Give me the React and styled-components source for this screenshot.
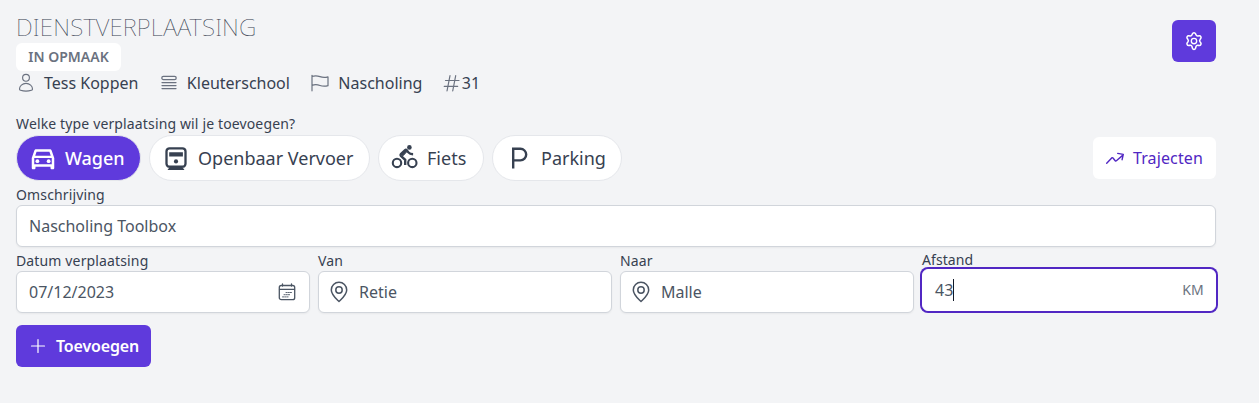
import React from "react";
import styled, { createGlobalStyle, css } from "styled-components";
import { MdOutlineDirectionsCar } from "react-icons/md";

const GlobalStyle = createGlobalStyle`
  *, *::before, *::after { box-sizing: border-box; }
  body {
    margin: 0;
    background: #f3f4f6;
    color: #374151;
    font-family: "Noto Sans", "Open Sans", sans-serif;
    font-size: 16px;
    line-height: 24px;
  }
  button, input { font: inherit; color: inherit; margin: 0; }
  svg { display: block; flex: none; }
`;

const Page = styled.main`
  min-height: 403px;
  padding: 12px 43px 36px 16px;
`;

const Header = styled.header`
  display: flex;
  justify-content: space-between;
  align-items: flex-start;
`;

const Title = styled.h1`
  margin: 0 0 1px;
  font-size: 24px;
  font-weight: 100;
  line-height: 30px;
  letter-spacing: 0.2px;
  text-transform: uppercase;
`;

const Status = styled.span`
  display: block;
  width: 105px;
  height: 28px;
  border-radius: 6px;
  background: #fff;
  color: #6b7280;
  font-size: 14px;
  font-weight: 600;
  line-height: 28px;
  text-align: center;
`;

const MetaList = styled.div`
  display: flex;
  color: #374151;
`;

const Meta = styled.span`
  display: flex;
  align-items: center;
  gap: ${(p) => p.$gap ?? 8}px;
  margin-right: 20.4px;
  svg { color: #6b7280; }
`;

const SettingsButton = styled.button`
  display: grid;
  place-items: center;
  width: 44px;
  height: 42px;
  margin-top: 8px;
  border: 0;
  border-radius: 6px;
  background: #5f3adc;
  color: #fff;
`;

const Label = styled.label`
  display: block;
  font-size: 14px;
  line-height: 20px;
  letter-spacing: 0.14px;
  ${(p) => p.$focused && css`
    margin-top: -1px;
    line-height: 19px;
    letter-spacing: 0.08px;
  `}
`;

const TypeSection = styled.section`
  margin-top: 19px;
`;

const TypeRow = styled.div`
  display: flex;
  align-items: center;
  justify-content: space-between;
  margin-top: 1px;
`;

const Pills = styled.div`
  display: flex;
  gap: 8px;
`;

const Pill = styled.button`
  display: flex;
  align-items: center;
  gap: 7px;
  width: ${(p) => p.$width}px;
  height: 46px;
  padding: 0 0 0 11px;
  border: 1px solid #e5e7eb;
  border-radius: 23px;
  background: ${(p) => (p.$active ? "#5f3adc" : "#fff")};
  color: ${(p) => (p.$active ? "#fff" : "#374151")};
  font-size: 18px;
  font-weight: ${(p) => (p.$active ? 500 : 400)};
  line-height: 28px;
  white-space: nowrap;
`;

const RoutesButton = styled.button`
  display: flex;
  align-items: center;
  gap: 8px;
  width: 123px;
  height: 42px;
  padding: 0 0 0 12px;
  border: 0;
  border-radius: 6px;
  background: #fff;
  color: #5127c3;
  letter-spacing: 0.12px;
`;

const Fields = styled.div`
  display: grid;
  grid-template-columns: repeat(${(p) => p.$columns}, minmax(0, 1fr));
  gap: 8px;
  margin-top: 4px;
`;

const InputBox = styled.div`
  display: flex;
  align-items: center;
  gap: 8px;
  height: 42px;
  padding: 0 12px 0 ${(p) => (p.$icon ? 8 : 12)}px;
  border: 1px solid #d1d5db;
  border-radius: 6px;
  background: #fff;
  color: #4b5563;
  box-shadow: 0 1px 2px rgba(0, 0, 0, 0.05);
  ${(p) => p.$focused && css`
    padding-right: 11px;
    border-color: #fff;
    box-shadow: 0 0 0 2px #5127c3;
  `}
`;

const Value = styled.span`
  flex: 1;
  display: flex;
  align-items: center;
`;

const Caret = styled.span`
  width: 1px;
  height: 22px;
  background: #111827;
`;

const Unit = styled.span`
  color: #6b7280;
  font-size: 14px;
  letter-spacing: 0.2px;
`;

const AddButton = styled.button`
  display: flex;
  align-items: center;
  gap: 8px;
  width: 135px;
  height: 42px;
  margin-top: 12px;
  padding: 0 0 0 12px;
  border: 0;
  border-radius: 6px;
  background: #5f3adc;
  color: #fff;
  font-weight: 600;
  letter-spacing: -0.15px;
`;

const LineIcon = ({ size = 20, width = 1.5, box = 24, children }) => (
  <svg width={size} height={size} viewBox={`0 0 ${box} ${box}`} fill="none" stroke="currentColor"
    strokeWidth={width} strokeLinecap="round" strokeLinejoin="round">{children}</svg>
);

const PersonIcon = () => (
  <LineIcon box={20} width={1.15}>
    <circle cx="10" cy="4.8" r="3.4" />
    <path d="M10 10.4c-3.7 0-6.5 2.6-6.5 5.6 0 .7.4 1.1 1 1.3 3.2 1 7.8 1 11 0 .6-.2 1-.6 1-1.3 0-3-2.8-5.6-6.5-5.6z" />
  </LineIcon>
);

const StackIcon = () => (
  <LineIcon box={20} width={1.25}>
    <rect x="2.8" y="3.4" width="14.400" height="3.200" rx="1.600" />
    <path d="M3 9.500h14M3 12.500h14M3 15.500h14" />
  </LineIcon>
);

const FlagIcon = () => (
  <LineIcon box={20} width={1.2}>
    <path d="M2 2.300v15.500M2 3.500c3-1.200 5.500-.8 8 .1s5 1 8 .2v8.900c-3 .8-5.500.7-8-.2s-5-1.200-8-.1" />
  </LineIcon>
);

const HashIcon = () => (
  <LineIcon size={17} box={17} width={1.2}>
    <path d="M7 .7 4 16M12.700.7 9.700 16M2.500 5.500h13.500M1.200 11.300h13.500" />
  </LineIcon>
);

const GearIcon = () => (
  <LineIcon box={20} width={1.35}>
    <circle cx="10" cy="10" r="2.700" />
    <path d="M8.600 3.200a1.500 1.500 0 0 1 2.800 0l.35.9a1.700 1.700 0 0 0 1.850 1.050l1-.15a1.500 1.500 0 0 1 1.400 2.400l-.6.800a1.700 1.700 0 0 0 0 2.100l.6.800a1.500 1.500 0 0 1-1.400 2.400l-1-.15a1.700 1.700 0 0 0-1.850 1.050l-.35 1.500a1.500 1.500 0 0 1-2.800 0l-.35-1.500A1.700 1.700 0 0 0 6.400 13.350l-1 .15A1.500 1.500 0 0 1 4 11.100l.6-.8a1.700 1.700 0 0 0 0-2.100L4 7.400A1.500 1.500 0 0 1 5.400 5l1 .15A1.700 1.700 0 0 0 8.250 4.100z" transform="translate(-1.200 -.85) scale(1.120 1.140)" />
  </LineIcon>
);

const TrendIcon = () => (
  <LineIcon box={20} width={1.4}>
    <path d="M1.700 15.200 6.700 9.900q.7-.6 1.300.1l2.200 2.700q.6.600 1.200.1L18.200 6.900M12.700 5.400l5.600 1-1.200 5.300" />
  </LineIcon>
);

const TrainIcon = () => (
  <svg width="30" height="30" viewBox="0 0 30 30" fill="currentColor">
    <rect x="5.500" y="5.300" width="19" height="18.400" rx="3" fill="none" stroke="currentColor" strokeWidth="2.300" />
    <path d="M8.200 9.200h13.700v4.200H8.200zM8.700 24h12.600l2.200 3H6.500z" />
    <circle cx="15" cy="18.400" r="2.100" />
  </svg>
);

const BikeIcon = () => (
  <svg width="30" height="30" viewBox="0 0 30 30" fill="none" stroke="currentColor" strokeWidth="2.100">
    <circle cx="7" cy="19.900" r="4.200" />
    <circle cx="22.300" cy="19.900" r="4.200" />
    <circle cx="19.400" cy="4.400" r="2.300" fill="currentColor" stroke="none" />
    <path d="M15.200 22v-5.200l-4.300-3.900q-.8-.9 0-1.800l4.200-4q.8-.7 1.600.1l1.600 2q1.600 1.900 4.800 2" strokeWidth="2.400" />
    <path d="m11 11 4.400-4 1.500 1.600-3.900 4.200z" fill="currentColor" strokeWidth="1" />
  </svg>
);

const ParkingIcon = () => (
  <svg width="30" height="30" viewBox="0 0 30 30" fill="none" stroke="currentColor" strokeWidth="2.400">
    <path d="M9.200 25.500V5.800h7.200a5.700 5.700 0 0 1 0 11.600H9.200" />
  </svg>
);

const CalendarIcon = () => (
  <LineIcon box={20} width={1.3}>
    <rect x="2.300" y="3.500" width="15.400" height="14.200" rx="2" />
    <path d="M2.500 7.300h15M5.500 2v2M14.500 2v2" />
    <path d="M9 10.500h5.500M7 12.700h6.500M5.500 14.900h6" strokeWidth="0.900" strokeDasharray="1.200 1" />
  </LineIcon>
);

const PinIcon = () => (
  <LineIcon size={24} box={24} width={1.5}>
    <path d="M12 21.500C9 18.600 4.300 14.800 4.300 10a7.700 7.700 0 0 1 15.400 0c0 4.800-4.700 8.600-7.700 11.500z" />
    <circle cx="12" cy="10" r="3.200" />
  </LineIcon>
);

const PlusIcon = () => (
  <LineIcon box={20} width={1.2}><path d="M10 3.500v13M3.500 10h13" /></LineIcon>
);

const Field = ({ label, value, icon, trailing, focused }) => (
  <div>
    <Label $focused={focused}>{label}</Label>
    <InputBox $icon={Boolean(icon)} $focused={focused}>
      {icon}
      <Value>{value}{focused && <Caret />}</Value>
      {trailing}
    </InputBox>
  </div>
);

export default function App() {
  return (
    <>
      <GlobalStyle />
      <Page>
        <Header>
          <div>
            <Title>Dienstverplaatsing</Title>
            <Status>IN OPMAAK</Status>
            <MetaList>
              <Meta><PersonIcon />Tess Koppen</Meta>
              <Meta><StackIcon />Kleuterschool</Meta>
              <Meta><FlagIcon />Nascholing</Meta>
              <Meta $gap={2}><HashIcon />31</Meta>
            </MetaList>
          </div>
          <SettingsButton aria-label="Instellingen"><GearIcon /></SettingsButton>
        </Header>

        <TypeSection>
          <Label as="div">Welke type verplaatsing wil je toevoegen?</Label>
          <TypeRow>
            <Pills>
              <Pill $active $width={125}><MdOutlineDirectionsCar size={30} />Wagen</Pill>
              <Pill $width={221}><TrainIcon />Openbaar Vervoer</Pill>
              <Pill $width={106}><BikeIcon />Fiets</Pill>
              <Pill $width={130}><ParkingIcon />Parking</Pill>
            </Pills>
            <RoutesButton><TrendIcon />Trajecten</RoutesButton>
          </TypeRow>
        </TypeSection>

        <Fields $columns={1}>
          <Field label="Omschrijving" value="Nascholing Toolbox" />
        </Fields>
        <Fields $columns={4}>
          <Field label="Datum verplaatsing" value="07/12/2023" trailing={<CalendarIcon />} />
          <Field label="Van" value="Retie" icon={<PinIcon />} />
          <Field label="Naar" value="Malle" icon={<PinIcon />} />
          <Field label="Afstand" value="43" trailing={<Unit>KM</Unit>} focused />
        </Fields>
        <AddButton><PlusIcon />Toevoegen</AddButton>
      </Page>
    </>
  );
}
